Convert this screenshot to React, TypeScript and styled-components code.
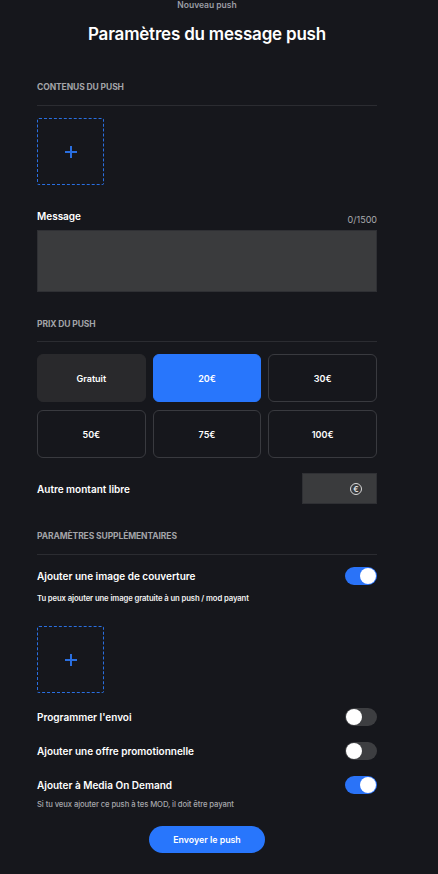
import React from "react";
import styled, { createGlobalStyle } from "styled-components";

const Global = createGlobalStyle`
  html, body { margin: 0; padding: 0; background: #16171c; }
  body { font-family: Inter, "Noto Sans", sans-serif; color: #fff; -webkit-font-smoothing: antialiased; }
  * { box-sizing: border-box; }
`;

const Page = styled.div`
  min-height: 874px;
  background: #16171c;
  padding: 0 61px 20px 37px;
  display: flex;
  flex-direction: column;
`;

const TopLabel = styled.div`
  text-align: center;
  font-size: 8.5px;
  line-height: 11px;
  font-weight: 600;
  color: #9c9ea6;
`;

const Title = styled.h1`
  margin: 12px 0 0;
  text-align: center;
  font-size: 17px;
  line-height: 22px;
  font-weight: 600;
  letter-spacing: -0.2px;
  color: #fff;
`;

const SectionTitle = styled.div<{ $mt: number }>`
  margin-top: ${(p) => p.$mt}px;
  font-size: 8.5px;
  line-height: 10px;
  font-weight: 700;
  text-transform: uppercase;
  color: #a3a4a8;
  letter-spacing: -0.1px;
`;

const Divider = styled.div<{ $mt: number }>`
  margin-top: ${(p) => p.$mt}px;
  height: 1px;
  background: #2b2c31;
`;

const DropZone = styled.div<{ $mt: number }>`
  margin-top: ${(p) => p.$mt}px;
  width: 67px;
  height: 67px;
  border: 1px dashed #2a6fe0;
  border-radius: 2px;
  display: flex;
  align-items: center;
  justify-content: center;
  cursor: pointer;
`;

const LabelRow = styled.div`
  margin-top: 24px;
  display: flex;
  justify-content: space-between;
  align-items: flex-start;
`;

const FieldLabel = styled.div`
  font-size: 10px;
  line-height: 14px;
  font-weight: 600;
  color: #fff;
`;

const Counter = styled.div`
  padding-top: 5px;
  font-size: 9px;
  line-height: 12px;
  color: #a9aaae;
`;

const TextArea = styled.textarea`
  margin-top: 4px;
  height: 62px;
  width: 100%;
  resize: none;
  background: #3a3b3d;
  border: 1px solid #2f3034;
  color: #fff;
  font-family: inherit;
  outline: none;
`;

const PriceGrid = styled.div`
  margin-top: 12px;
  display: grid;
  grid-template-columns: repeat(3, 1fr);
  gap: 8px 7px;
`;

const PriceButton = styled.button<{ $variant: "free" | "active" | "default" }>`
  height: 48px;
  border-radius: 6px;
  font-family: inherit;
  font-size: 9px;
  font-weight: 600;
  color: #fff;
  cursor: pointer;
  background: ${(p) =>
    p.$variant === "active" ? "#2876fc" : p.$variant === "free" ? "#29292c" : "transparent"};
  border: 1px solid
    ${(p) => (p.$variant === "active" ? "#2876fc" : p.$variant === "free" ? "#29292c" : "#393a3f")};
`;

const Row = styled.div<{ $mt: number }>`
  margin-top: ${(p) => p.$mt}px;
  display: flex;
  align-items: center;
  justify-content: space-between;
`;

const AmountBox = styled.div`
  width: 75px;
  height: 31px;
  background: #3a3b3d;
  border: 1px solid #2f3034;
  display: flex;
  align-items: center;
  justify-content: flex-end;
  padding-right: 14px;
`;

const EuroCircle = styled.span`
  width: 12px;
  height: 12px;
  border: 1px solid #d9d9d9;
  border-radius: 50%;
  display: flex;
  align-items: center;
  justify-content: center;
  font-size: 8px;
  line-height: 1;
  font-weight: 600;
  color: #e6e6e6;
`;

const Toggle = styled.span<{ $on: boolean }>`
  position: relative;
  width: 32px;
  height: 18px;
  border-radius: 9px;
  background: ${(p) => (p.$on ? "#2a73f8" : "#3d3e41")};
  flex-shrink: 0;
  &::after {
    content: "";
    position: absolute;
    top: 1px;
    left: ${(p) => (p.$on ? "15px" : "1px")};
    width: 16px;
    height: 16px;
    border-radius: 50%;
    background: #fff;
  }
`;

const Hint = styled.div<{ $mt: number; $muted?: boolean }>`
  margin-top: ${(p) => p.$mt}px;
  font-size: 7.7px;
  line-height: 10px;
  font-weight: ${(p) => (p.$muted ? 500 : 600)};
  color: ${(p) => (p.$muted ? "#a7a8ac" : "#f2f2f2")};
  letter-spacing: -0.1px;
`;

const SubmitButton = styled.button`
  margin: 16px auto 0;
  width: 116px;
  height: 27px;
  border-radius: 14px;
  border: none;
  background: #2876fc;
  color: #fff;
  font-family: inherit;
  font-size: 8.8px;
  font-weight: 600;
  cursor: pointer;
`;

const Plus = () => (
  <svg width="12" height="12" viewBox="0 0 12 12">
    <path d="M6 0v12M0 6h12" stroke="#2a6fe0" strokeWidth="2" />
  </svg>
);

const prices: { label: string; variant: "free" | "active" | "default" }[] = [
  { label: "Gratuit", variant: "free" },
  { label: "20€", variant: "active" },
  { label: "30€", variant: "default" },
  { label: "50€", variant: "default" },
  { label: "75€", variant: "default" },
  { label: "100€", variant: "default" },
];

export default function App() {
  return (
    <>
      <Global />
      <Page>
        <TopLabel>Nouveau push</TopLabel>
        <Title>Paramètres du message push</Title>

        <SectionTitle $mt={37}>Contenus du push</SectionTitle>
        <Divider $mt={13} />
        <DropZone $mt={12}>
          <Plus />
        </DropZone>

        <LabelRow>
          <FieldLabel>Message</FieldLabel>
          <Counter>0/1500</Counter>
        </LabelRow>
        <TextArea />

        <SectionTitle $mt={27}>Prix du push</SectionTitle>
        <Divider $mt={12} />
        <PriceGrid>
          {prices.map((p) => (
            <PriceButton key={p.label} $variant={p.variant}>
              {p.label}
            </PriceButton>
          ))}
        </PriceGrid>

        <Row $mt={15}>
          <FieldLabel>Autre montant libre</FieldLabel>
          <AmountBox>
            <EuroCircle>€</EuroCircle>
          </AmountBox>
        </Row>

        <SectionTitle $mt={27}>Paramètres supplémentaires</SectionTitle>
        <Divider $mt={13} />
        <Row $mt={12}>
          <FieldLabel>Ajouter une image de couverture</FieldLabel>
          <Toggle $on />
        </Row>
        <Hint $mt={9}>Tu peux ajouter une image gratuite à un push / mod payant</Hint>
        <DropZone $mt={22}>
          <Plus />
        </DropZone>

        <Row $mt={15}>
          <FieldLabel>Programmer l'envoi</FieldLabel>
          <Toggle $on={false} />
        </Row>
        <Row $mt={16}>
          <FieldLabel>Ajouter une offre promotionnelle</FieldLabel>
          <Toggle $on={false} />
        </Row>
        <Row $mt={16}>
          <FieldLabel>Ajouter à Media On Demand</FieldLabel>
          <Toggle $on />
        </Row>
        <Hint $mt={6} $muted>
          Si tu veux ajouter ce push à tes MOD, il doit être payant
        </Hint>

        <SubmitButton>Envoyer le push</SubmitButton>
      </Page>
    </>
  );
}
